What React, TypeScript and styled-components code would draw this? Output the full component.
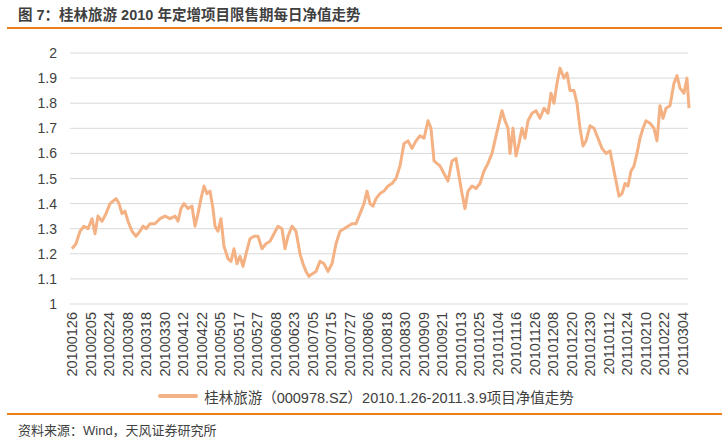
import React from "react";
import styled, { createGlobalStyle } from "styled-components";

const Global = createGlobalStyle`
  body { margin: 0; background: #fff; font-family: "Liberation Sans", "Noto Sans CJK SC", sans-serif; }
`;

const Page = styled.div`
  width: 722px; height: 445px; display: flex; flex-direction: column; overflow: hidden;
`;
const Title = styled.div`
  margin-left: 7px; height: 27px; padding-left: 11px; display: flex; align-items: center;
  font-size: 14.5px; font-weight: bold; color: #3f3f3f; border-bottom: 2.5px solid #ee7d1c;
  font-family: "Liberation Sans", "Noto Sans CJK SC", sans-serif;
`;
const Chart = styled.svg`
  display: block;
`;
const Legend = styled.div`
  height: 24px; display: flex; align-items: center; justify-content: center; gap: 6px;
  font-size: 14.5px; color: #404040; padding-left: 10px;
`;
const Swatch = styled.span`
  width: 40px; height: 4px; border-radius: 2px; background: #f4b183;
`;
const Footer = styled.div`
  margin-left: 7px; margin-top: 5px; border-top: 2.5px solid #ee7d1c; padding: 5px 0 0 11px;
  font-size: 13px; color: #404040;
`;

const pts: [number, number][] = [
[72,1.22],[76,1.24],[80,1.29],[84,1.31],[88,1.30],[92,1.34],[95,1.28],[98,1.35],[102,1.33],[106,1.36],[110,1.40],[113,1.41],[116,1.42],[119,1.40],[122,1.36],[125,1.37],[128,1.33],[132,1.29],[136,1.27],[140,1.29],[143,1.31],[146,1.30],[150,1.32],[155,1.32],[160,1.34],[165,1.35],[170,1.34],[175,1.35],[178,1.33],[181,1.38],[184,1.40],[188,1.38],[192,1.39],[195,1.31],[198,1.36],[201,1.42],[204,1.47],[207,1.44],[210,1.45],[213,1.38],[215,1.31],[218,1.29],[221,1.34],[224,1.23],[228,1.18],[231,1.17],[234,1.22],[237,1.16],[240,1.19],[243,1.15],[246,1.20],[250,1.26],[254,1.27],[258,1.27],[262,1.22],[266,1.24],[270,1.25],[274,1.28],[278,1.31],[282,1.30],[285,1.22],[288,1.27],[292,1.31],[296,1.29],[300,1.20],[303,1.16],[306,1.13],[309,1.11],[312,1.12],[316,1.13],[320,1.17],[324,1.16],[328,1.13],[332,1.16],[336,1.24],[340,1.29],[344,1.30],[348,1.31],[352,1.32],[356,1.32],[360,1.36],[364,1.40],[367,1.45],[370,1.40],[373,1.39],[376,1.42],[380,1.44],[384,1.45],[388,1.47],[392,1.48],[396,1.50],[400,1.55],[404,1.64],[408,1.65],[412,1.62],[416,1.65],[420,1.67],[424,1.66],[428,1.73],[431,1.70],[434,1.57],[437,1.56],[440,1.55],[444,1.52],[448,1.49],[452,1.57],[456,1.58],[459,1.51],[462,1.44],[465,1.38],[468,1.45],[472,1.47],[476,1.46],[480,1.48],[484,1.53],[488,1.56],[492,1.60],[496,1.67],[499,1.72],[502,1.77],[505,1.73],[508,1.70],[510,1.60],[513,1.70],[516,1.59],[519,1.64],[522,1.70],[525,1.66],[528,1.73],[532,1.76],[536,1.77],[540,1.74],[544,1.78],[548,1.76],[551,1.84],[554,1.80],[557,1.88],[560,1.94],[564,1.90],[567,1.92],[570,1.85],[574,1.85],[577,1.80],[580,1.70],[583,1.63],[586,1.65],[590,1.71],[594,1.70],[598,1.66],[602,1.62],[606,1.60],[610,1.61],[613,1.55],[616,1.49],[619,1.43],[622,1.44],[625,1.48],[628,1.47],[631,1.53],[634,1.55],[637,1.60],[640,1.66],[643,1.70],[646,1.73],[650,1.72],[654,1.70],[657,1.65],[660,1.79],[663,1.74],[666,1.78],[670,1.79],[674,1.88],[677,1.91],[680,1.86],[684,1.84],[687,1.90],[689,1.78]];

const labels = "20100126 20100205 20100224 20100308 20100318 20100330 20100412 20100422 20100505 20100517 20100527 20100608 20100623 20100705 20100715 20100727 20100806 20100818 20100830 20100909 20100921 20101013 20101025 20101104 20101116 20101126 20101208 20101220 20101230 20110112 20110124 20110210 20110222 20110304".split(" ");

const OFF = 30;
const yOf = (v: number) => 305 - (v - 1) * 251 - OFF;
const ticks = [1, 1.1, 1.2, 1.3, 1.4, 1.5, 1.6, 1.7, 1.8, 1.9, 2];

export default function App() {
  const d = pts.map(([x, v], i) => `${i ? "L" : "M"}${x},${yOf(v).toFixed(1)}`).join(" ");
  return (
    <Page>
      <Global />
      <Title>图 7：桂林旅游 2010 年定增项目限售期每日净值走势</Title>
      <Chart width={722} height={355} viewBox="0 0 722 355">
        {ticks.map((t) => (
          <g key={t}>
            <line x1={70} x2={688} y1={yOf(t)} y2={yOf(t)} stroke="#d9d9d9" strokeWidth={1} />
            <text x={57} y={yOf(t) + 5} textAnchor="end" fontSize={14} fill="#404040"
              fontFamily="Liberation Sans, sans-serif">{String(t)}</text>
          </g>
        ))}
        {labels.map((l, i) => {
          const x = 72 + i * 18.5 + 5;
          const y = 313 - OFF;
          return (
            <text key={l} x={x} y={y} transform={`rotate(-90 ${x} ${y})`} textAnchor="end"
              fontSize={14.5} fill="#404040" fontFamily="Liberation Sans, sans-serif">{l}</text>
          );
        })}
        <path d={d} fill="none" stroke="#f4b183" strokeWidth={3} strokeLinejoin="round" />
      </Chart>
      <Legend><Swatch />桂林旅游（000978.SZ）2010.1.26-2011.3.9项目净值走势</Legend>
      <Footer>资料来源：Wind，天风证券研究所</Footer>
    </Page>
  );
}
